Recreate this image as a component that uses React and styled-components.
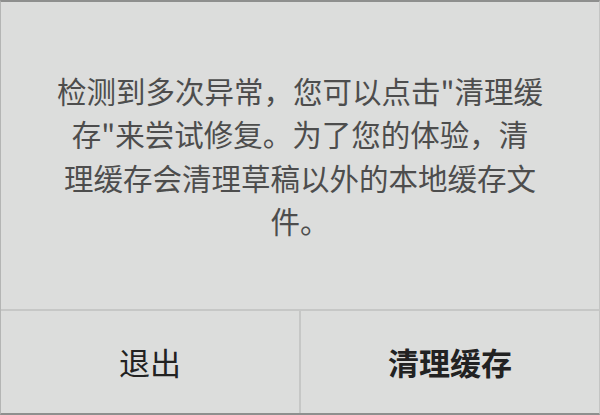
import React from "react"
import styled, { createGlobalStyle } from "styled-components"

const GlobalStyles = createGlobalStyle`
  html, body {
    margin: 0;
    padding: 0;
    background: #dcdddc;
  }
  body {
    font-family: "Noto Sans CJK SC", "Noto Sans", sans-serif;
  }
`

const Dialog = styled.div`
  width: 600px;
  height: 415px;
  box-sizing: border-box;
  display: flex;
  flex-direction: column;
  background: #dcdddc;
  border-top: 2px solid #8e8f8e;
  border-left: 1px solid #b4b5b4;
  border-right: 1px solid #c4c5c4;
  border-bottom: 2px solid #8e8f8e;
`

const Message = styled.div`
  flex: 1;
  display: flex;
  align-items: center;
  justify-content: center;
  padding: 0 40px;
`

const MessageText = styled.p`
  margin: 0;
  text-align: center;
  font-size: 29.5px;
  line-height: 43.5px;
  color: #4d4d4d;
`

const Actions = styled.div`
  height: 102px;
  display: flex;
  border-top: 2px solid #c6c7c6;
`

const Action = styled.button`
  flex: 1;
  border: none;
  background: transparent;
  font-family: "Noto Sans CJK SC", sans-serif;
  font-size: 31px;
  color: #222;
  font-weight: ${(p) => (p.$primary ? 700 : 400)};
  padding: 0 0 2px;
  & + & {
    border-left: 2px solid #c6c7c6;
  }
`

export default function App() {
  return (
    <>
      <GlobalStyles />
      <Dialog>
        <Message>
          <MessageText>
            检测到多次异常，您可以点击"清理缓
            <br />
            存"来尝试修复。为了您的体验，清
            <br />
            理缓存会清理草稿以外的本地缓存文
            <br />
            件。
          </MessageText>
        </Message>
        <Actions>
          <Action>退出</Action>
          <Action $primary>清理缓存</Action>
        </Actions>
      </Dialog>
    </>
  )
}
